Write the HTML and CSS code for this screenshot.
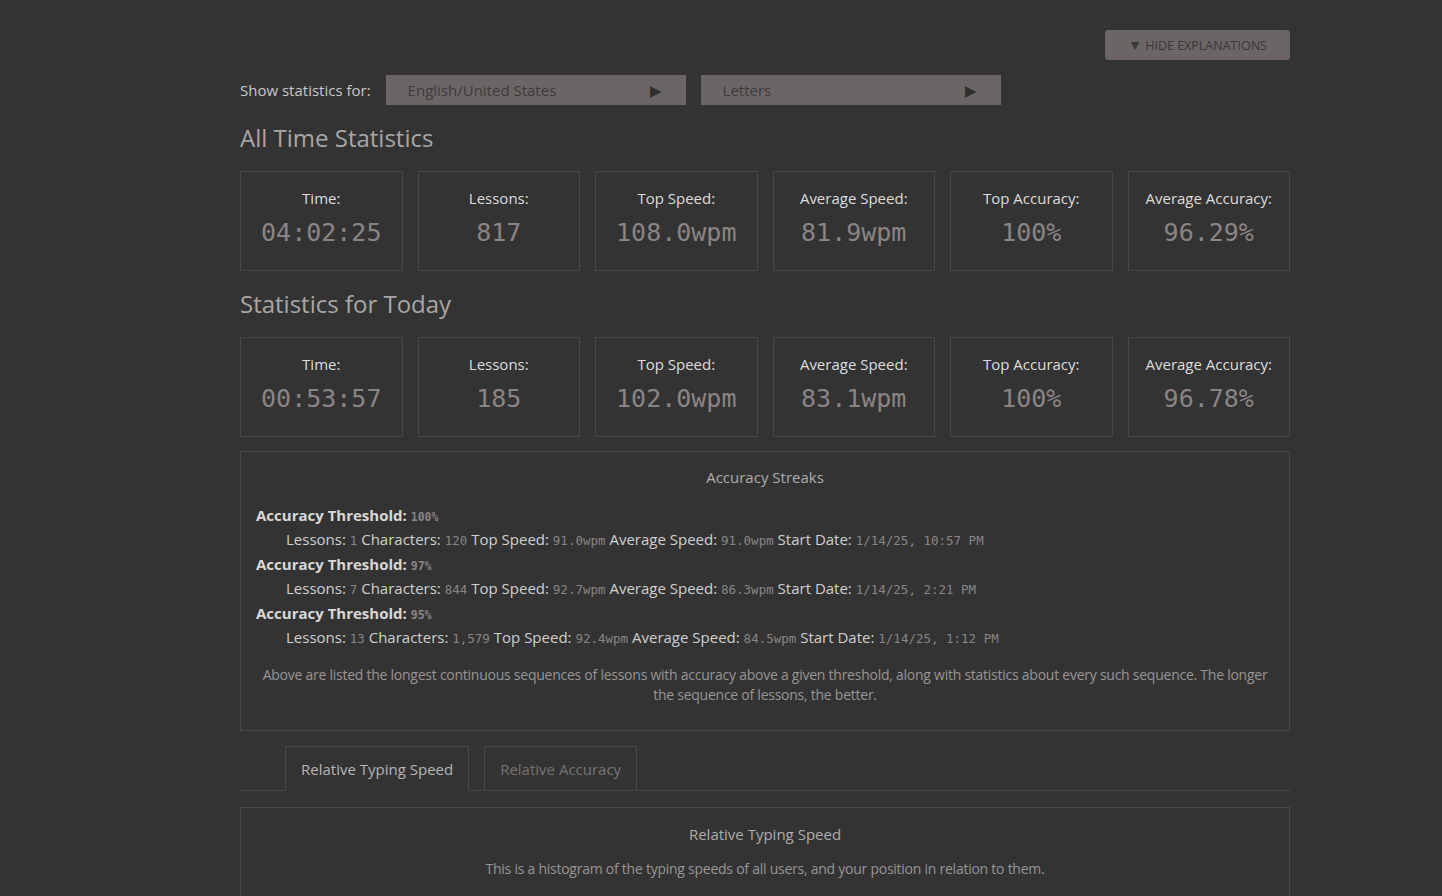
FILE: index.html
```html
<!DOCTYPE html>
<html>
<head>
<meta charset="utf-8">
<link rel="stylesheet" href="styles.css">
</head>
<body>
<div class="page">
  <div class="topbar">
    <button class="hide-btn"><span class="tri">▼</span> HIDE EXPLANATIONS</button>
  </div>
  <div class="filter-row">
    <span class="filter-label">Show statistics for:</span>
    <div class="select"><span>English/United States</span><span class="arrow">▶</span></div>
    <div class="select"><span>Letters</span><span class="arrow">▶</span></div>
  </div>

  <h2 class="section-title">All Time Statistics</h2>
  <div class="cards">
    <div class="card"><div class="card-label">Time:</div><div class="card-value">04:02:25</div></div>
    <div class="card"><div class="card-label">Lessons:</div><div class="card-value">817</div></div>
    <div class="card"><div class="card-label">Top Speed:</div><div class="card-value">108.0wpm</div></div>
    <div class="card"><div class="card-label">Average Speed:</div><div class="card-value">81.9wpm</div></div>
    <div class="card"><div class="card-label">Top Accuracy:</div><div class="card-value">100%</div></div>
    <div class="card"><div class="card-label">Average Accuracy:</div><div class="card-value">96.29%</div></div>
  </div>

  <h2 class="section-title">Statistics for Today</h2>
  <div class="cards">
    <div class="card"><div class="card-label">Time:</div><div class="card-value">00:53:57</div></div>
    <div class="card"><div class="card-label">Lessons:</div><div class="card-value">185</div></div>
    <div class="card"><div class="card-label">Top Speed:</div><div class="card-value">102.0wpm</div></div>
    <div class="card"><div class="card-label">Average Speed:</div><div class="card-value">83.1wpm</div></div>
    <div class="card"><div class="card-label">Top Accuracy:</div><div class="card-value">100%</div></div>
    <div class="card"><div class="card-label">Average Accuracy:</div><div class="card-value">96.78%</div></div>
  </div>

  <div class="box streaks">
    <div class="box-title">Accuracy Streaks</div>
    <div class="streak-list">
      <div class="streak-head"><b>Accuracy Threshold:</b> <span class="mono bold">100%</span></div>
      <div class="streak-row">Lessons: <span class="mono">1</span> Characters: <span class="mono">120</span> Top Speed: <span class="mono">91.0wpm</span> Average Speed: <span class="mono">91.0wpm</span> Start Date: <span class="mono">1/14/25, 10:57 PM</span></div>
      <div class="streak-head"><b>Accuracy Threshold:</b> <span class="mono bold">97%</span></div>
      <div class="streak-row">Lessons: <span class="mono">7</span> Characters: <span class="mono">844</span> Top Speed: <span class="mono">92.7wpm</span> Average Speed: <span class="mono">86.3wpm</span> Start Date: <span class="mono">1/14/25, 2:21 PM</span></div>
      <div class="streak-head"><b>Accuracy Threshold:</b> <span class="mono bold">95%</span></div>
      <div class="streak-row">Lessons: <span class="mono">13</span> Characters: <span class="mono">1,579</span> Top Speed: <span class="mono">92.4wpm</span> Average Speed: <span class="mono">84.5wpm</span> Start Date: <span class="mono">1/14/25, 1:12 PM</span></div>
    </div>
    <p class="explain">Above are listed the longest continuous sequences of lessons with accuracy above a given threshold, along with statistics about every such sequence. The longer the sequence of lessons, the better.</p>
  </div>

  <div class="tabs">
    <div class="tab active">Relative Typing Speed</div>
    <div class="tab">Relative Accuracy</div>
  </div>

  <div class="box relative">
    <div class="box-title">Relative Typing Speed</div>
    <p class="explain">This is a histogram of the typing speeds of all users, and your position in relation to them.</p>
  </div>
</div>
</body>
</html>
```

FILE: styles.css
```css
html, body {
  margin: 0;
  padding: 0;
  background: #333333;
  height: 100%;
  overflow: hidden;
}
body {
  font-family: "Open Sans", "Liberation Sans", sans-serif;
  color: #cccccc;
}
.page {
  width: 1050px;
  margin-left: 240px;
  padding-top: 30px;
}
.topbar {
  display: flex;
  justify-content: flex-end;
}
.hide-btn {
  width: 185px;
  height: 30px;
  background: #6b6665;
  border: none;
  border-radius: 3px;
  color: #383838;
  font-family: "Open Sans", sans-serif;
  font-size: 12.5px;
  padding: 0;
  cursor: pointer;
}
.hide-btn .tri {
  font-size: 14px;
  line-height: 1;
}
.filter-row {
  display: flex;
  align-items: center;
  gap: 15px;
  margin-top: 15px;
  height: 30px;
}
.filter-label {
  font-size: 15px;
  color: #c8c8c8;
}
.select {
  width: 300px;
  height: 30px;
  box-sizing: border-box;
  background: #6b6665;
  display: flex;
  align-items: center;
  justify-content: space-between;
  padding: 0 24px 0 22px;
  font-size: 15px;
  color: #3c3c3c;
}
.select .arrow {
  font-size: 15px;
  color: #2f2f2f;
}
.section-title {
  margin: 15px 0 15px 0;
  font-weight: normal;
  font-size: 24px;
  line-height: 36px;
  color: #aaa6a5;
}
.cards {
  display: grid;
  grid-template-columns: repeat(6, 1fr);
  gap: 15px;
}
.card {
  height: 100px;
  box-sizing: border-box;
  border: 1px solid #484848;
  display: flex;
  flex-direction: column;
  align-items: center;
  padding-top: 15px;
}
.card-label {
  font-size: 15px;
  line-height: 22px;
  color: #dddddd;
}
.card-value {
  font-family: "DejaVu Sans Mono", "Liberation Mono", monospace;
  font-size: 25px;
  line-height: 34px;
  margin-top: 7px;
  color: #8a8584;
}
.box {
  border: 1px solid #484848;
  margin-top: 15px;
  box-sizing: border-box;
}
.box-title {
  text-align: center;
  font-size: 15px;
  line-height: 20px;
  color: #b0acab;
}
.streaks {
  margin-top: 14px;
  padding: 15px 15px 25px 15px;
}
.streak-list {
  margin-top: 16px;
  font-size: 15px;
  line-height: 24.5px;
  color: #d0d0d0;
}
.streak-head, .streak-row {
  height: 24.5px;
  white-space: nowrap;
}
.streak-head b {
  font-weight: 700;
  color: #d8d8d8;
}
.streak-row {
  padding-left: 30px;
  margin-top: -1px;
  margin-bottom: 1px;
}
.mono {
  font-family: "DejaVu Sans Mono", "Liberation Mono", monospace;
  font-size: 12.5px;
  line-height: 1;
  color: #8a8584;
}
.mono.bold {
  font-weight: bold;
  font-size: 11.5px;
}
.explain {
  margin: 16px 0 0 0;
  text-align: center;
  font-size: 14px;
  line-height: 20px;
  color: #999594;
  letter-spacing: -0.25px;
}
.tabs {
  margin-top: 15px;
  display: flex;
  gap: 15px;
  padding-left: 45px;
  border-bottom: 1px solid #484848;
  height: 45px;
  box-sizing: border-box;
}
.tab {
  box-sizing: border-box;
  height: 45px;
  border: 1px solid #484848;
  padding: 0 15px;
  display: flex;
  align-items: center;
  font-size: 15px;
  color: #777373;
}
.tab.active {
  color: #b8b4b3;
  border-bottom-color: #333333;
}
.relative {
  margin-top: 16px;
  padding: 16px 15px 30px 15px;
  height: 120px;
}
.relative .explain {
  margin-top: 15px;
}
```
